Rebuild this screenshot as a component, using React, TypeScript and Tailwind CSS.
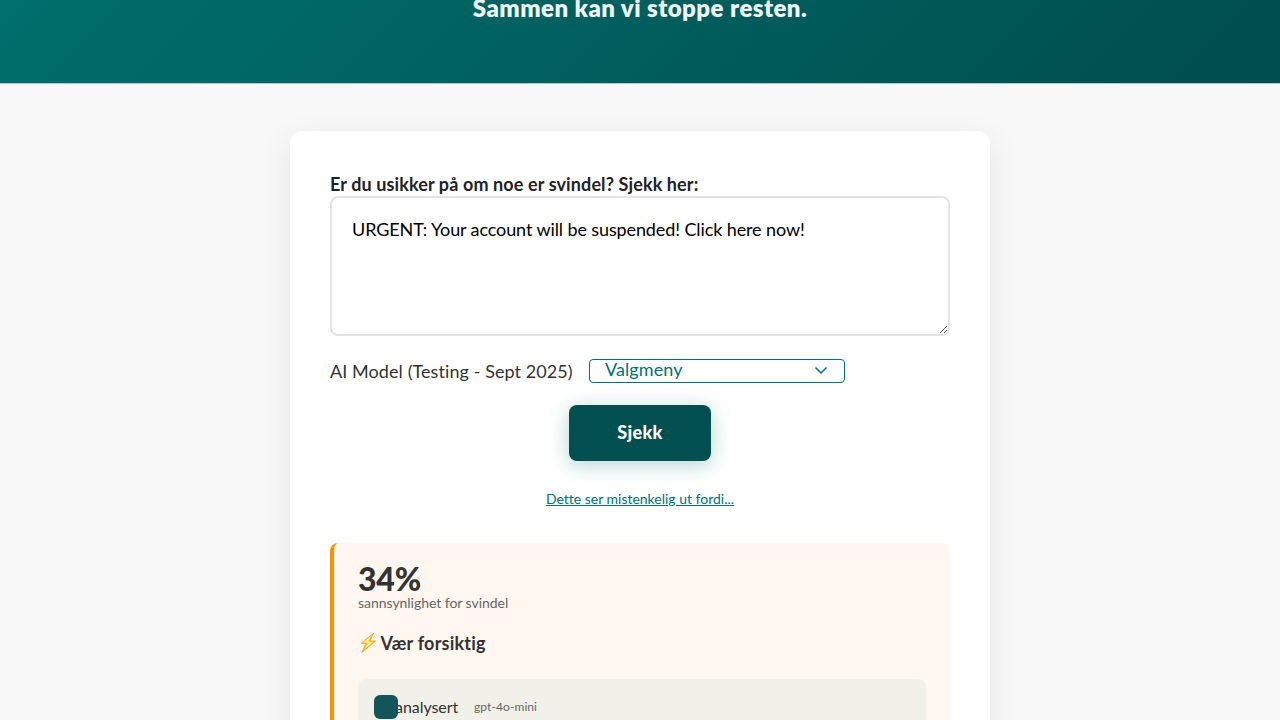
function Bolt() {
  return (
    <svg className="h-[22px] w-[18px] shrink-0" viewBox="0 0 18 22" fill="none">
      <path d="M15.8 1 3 11.5h5.3L3.8 20.5 18 8.9h-5.8Z" fill="#feb804" />
      <path d="M13.7 3.3 5 10.7h5L6.6 17.1 15.4 9.8H10.2Z" fill="#fff3a0" />
      <path d="M15.8 1 3 11.5h5.3L3.8 20.5 17.5 8.9h-5.5Z" stroke="#f9a53a" strokeWidth=".8" strokeLinejoin="round" />
    </svg>
  );
}

export default function App() {
  return (
    <div className="flex h-[720px] flex-col overflow-hidden bg-[#f8f8f8] font-['Lato',sans-serif] text-[#333] [font-variant-ligatures:none]">
      <header className="h-[84px] shrink-0 border-b border-[#a9cdcc] bg-[linear-gradient(135deg,#006f6d_0%,#004d4d_100%)] text-center">
        <h2 className="-mt-2 text-[24px] leading-8 font-extrabold tracking-[0.45px] whitespace-nowrap text-[#f0f7f7]">
          Sammen kan vi stoppe resten.
        </h2>
      </header>
      <main className="mx-auto mt-[47.4px] h-[900px] w-[700px] shrink-0 rounded-xl bg-white px-10 pt-10 shadow-[0_8px_32px_rgba(0,0,0,0.08)]">
        <label htmlFor="message" className="block h-[25px] pt-px text-[18px] leading-[25px] font-bold tracking-[0.11px] whitespace-nowrap text-[#222]">
          Er du usikker på om noe er svindel? Sjekk her:
        </label>
        <textarea
          id="message"
          className="block h-[140px] w-full resize rounded-lg border-2 border-[#e3e3e3] bg-white px-5 pt-[18px] text-[18px] leading-[27px] tracking-[-0.11px] text-black outline-none"
          defaultValue="URGENT: Your account will be suspended! Click here now!"
        />
        <div className="mt-[22.2px] flex h-6 items-center gap-4">
          <span className="w-[243px] text-[18px] leading-6 tracking-[0.08px] whitespace-nowrap">AI Model (Testing - Sept 2025)</span>
          <button className="flex h-6 w-[256px] items-center justify-between rounded border border-[#007272] px-[15px] text-[18px] leading-[22px] tracking-[0.1px] text-[#007272]">
            <span className="-mt-[3px]">Valgmeny</span>
            <svg className="-mt-px h-4 w-4" viewBox="0 0 16 16" fill="none">
              <path d="m2.5 5.5 5.5 5.5 5.5-5.5" stroke="currentColor" strokeWidth="1.5" />
            </svg>
          </button>
        </div>
        <div className="mt-[22.4px] flex flex-col items-center">
          <button className="h-14 w-[142px] rounded-lg bg-[#014f4e] text-[18px] font-black tracking-[0.3px] text-white shadow-[0_4px_20px_rgba(0,114,114,0.3)]">
            Sjekk
          </button>
          <a href="#" className="mt-7 text-[14px] leading-5 tracking-[-0.01px] text-[#007272] underline">Dette ser mistenkelig ut fordi...</a>
        </div>
        <section className="mt-[34px] h-[400px] rounded-lg border-l-4 border-[#ff9100] bg-[#fff7f0] px-6 pt-5">
          <div className="text-[32px] leading-8 font-black tracking-[-0.2px]">34%</div>
          <div className="text-[14px] leading-4 tracking-[-0.04px] text-[#666]">sannsynlighet for svindel</div>
          <h3 className="mt-5 flex h-6 items-center gap-[4.5px] text-[18px] font-bold tracking-[0.2px]">
            <Bolt />
            <span className="pt-px">Vær forsiktig</span>
          </h3>
          <div className="mt-6 h-[200px] rounded-lg bg-[#f1f1e9] p-4">
            <div className="flex h-6 items-center">
              <span className="relative z-10 h-6 w-6 shrink-0 rounded-md bg-[#14555a]" />
              <span className="-ml-[3px] w-[79px] pt-px text-[16px] tracking-[-0.05px]">analysert</span>
              <span className="text-[12px] tracking-[0.08px] text-[#666]">gpt-4o-mini</span>
            </div>
          </div>
        </section>
      </main>
    </div>
  );
}
